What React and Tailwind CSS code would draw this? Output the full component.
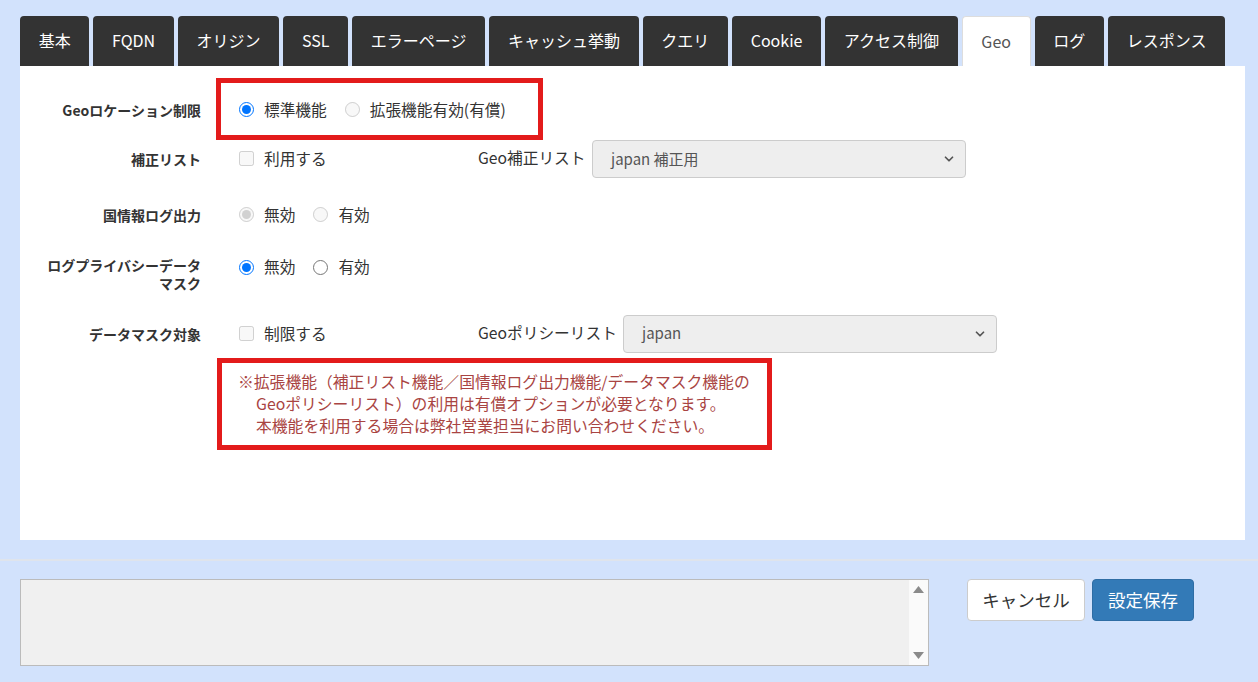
import { ChevronDown } from 'lucide-react'

const tabs = ['基本', 'FQDN', 'オリジン', 'SSL', 'エラーページ', 'キャッシュ挙動', 'クエリ', 'Cookie', 'アクセス制御', 'Geo', 'ログ', 'レスポンス']

function Radio({ checked, disabled, label, name }) {
  return (
    <label className="flex items-center mr-[18px]">
      <input
        type="radio"
        name={name}
        defaultChecked={checked}
        disabled={disabled}
        className="m-0 w-[15px] h-[15px] accent-[#0075ff]"
      />
      <span className="ml-[10px]">{label}</span>
    </label>
  )
}

function Check({ label }) {
  return (
    <label className="flex items-center">
      <input type="checkbox" disabled className="m-0 w-[15px] h-[15px]" />
      <span className="ml-[10px]">{label}</span>
    </label>
  )
}

function Select({ value }) {
  return (
    <div className="w-[374px] h-[38px] flex items-center justify-between rounded-[4px] border border-[#ccc] bg-[#eee] pl-[18px] pr-[9px] text-[15px] text-[#555]">
      <span>{value}</span>
      <ChevronDown className="w-[14px] h-[14px] text-[#555]" strokeWidth={3} />
    </div>
  )
}

function Label({ children }) {
  return (
    <div className="w-[181px] shrink-0 text-right text-[14px] font-bold text-[#333] leading-[18px]">
      {children}
    </div>
  )
}

export default function App() {
  return (
    <div className="min-h-[682px] bg-[#d2e2fc] font-['Noto_Sans_CJK_JP',sans-serif] text-[#333]">
      <div className="pl-5 pr-[13px] pt-4">
        {/* Tabs */}
        <div className="flex gap-1">
          {tabs.map((t) =>
            t === 'Geo' ? (
              <div
                key={t}
                className="h-[50px] flex items-center pb-[2px] px-[18.7px] rounded-t-[4px] bg-white border border-b-0 border-[#ddd] text-[16px] text-[#555]"
              >
                {t}
              </div>
            ) : (
              <div
                key={t}
                className="h-[50px] flex items-center pb-[2px] px-[18.7px] rounded-t-[4px] bg-[#333] text-[16px] text-white"
              >
                {t}
              </div>
            )
          )}
        </div>

        {/* Panel */}
        <div className="h-[474px] bg-white pt-[32px] text-[15.7px]">
          <div className="relative flex items-center h-6">
            <Label>Geoロケーション制限</Label>
            <div className="ml-[38px] flex items-center">
              <Radio name="geo" checked label="標準機能" />
              <Radio name="geo" disabled label="拡張機能有効(有償)" />
            </div>
            <div className="absolute left-[196px] top-[-20px] w-[327px] h-[62px] border-[5px] border-[#e31b1b]" />
          </div>

          <div className="mt-[18px] flex items-center h-[38px]">
            <Label>補正リスト</Label>
            <div className="ml-[38px] w-[239px]">
              <Check label="利用する" />
            </div>
            <span className="w-[114px] self-start mt-[6px]">Geo補正リスト</span>
            <Select value="japan 補正用" />
          </div>

          <div className="mt-[25px] flex items-center h-6">
            <Label>国情報ログ出力</Label>
            <div className="ml-[38px] flex items-center">
              <Radio name="country" checked disabled label="無効" />
              <Radio name="country" disabled label="有効" />
            </div>
          </div>

          <div className="mt-[29px] flex items-start">
            <Label>
              ログプライバシーデータ
              <br />
              マスク
            </Label>
            <div className="ml-[38px] flex items-center h-[22px]">
              <Radio name="mask" checked label="無効" />
              <Radio name="mask" label="有効" />
            </div>
          </div>

          <div className="mt-[23px] flex items-center h-[37px]">
            <Label>データマスク対象</Label>
            <div className="ml-[38px] w-[239px]">
              <Check label="制限する" />
            </div>
            <span className="w-[145px] self-start mt-[6px]">Geoポリシーリスト</span>
            <Select value="japan" />
          </div>

          <div className="mt-[6px] ml-[197px] w-[555px] border-[5px] border-[#e31b1b] pl-[16px] py-2 text-[15.8px] leading-[22px] text-[#a94442]">
            <div>※拡張機能（補正リスト機能／国情報ログ出力機能/データマスク機能の</div>
            <div className="pl-[18px]">Geoポリシーリスト）の利用は有償オプションが必要となります。</div>
            <div className="pl-[18px]">本機能を利用する場合は弊社営業担当にお問い合わせください。</div>
          </div>
        </div>
      </div>

      {/* Footer */}
      <div className="mt-[19px] border-t-2 border-[#dfe4ec]">
        <div className="flex items-start pl-5 pt-[18px]">
          <div className="w-[909px] h-[87px] border border-[#bbb] bg-[#f0f0f0] flex justify-end">
            <div className="w-[19px] h-full bg-[#fafafa] flex flex-col items-center justify-between py-[6px]">
              <svg width="11" height="7" viewBox="0 0 11 7">
                <path d="M5.5 0 L11 7 L0 7 Z" fill="#8a8a8a" />
              </svg>
              <svg width="11" height="7" viewBox="0 0 11 7">
                <path d="M0 0 L11 0 L5.5 7 Z" fill="#8a8a8a" />
              </svg>
            </div>
          </div>
          <div className="ml-[38px] flex gap-[7px]">
            <button className="w-[118px] h-[42px] rounded-[4px] border border-[#ccc] bg-white text-[17.5px] text-[#333]">
              キャンセル
            </button>
            <button className="w-[102px] h-[42px] rounded-[4px] border border-[#2e6da4] bg-[#337ab7] text-[17.5px] text-white">
              設定保存
            </button>
          </div>
        </div>
      </div>
    </div>
  )
}
